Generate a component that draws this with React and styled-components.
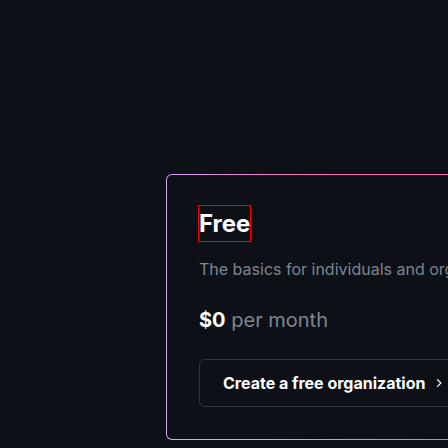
import styled, { createGlobalStyle } from "styled-components";

const GlobalStyle = createGlobalStyle`
  html, body {
    margin: 0;
    padding: 0;
    background: #0d1117;
    overflow: hidden;
  }
  body {
    font-family: Inter, "Liberation Sans", sans-serif;
    color: #e6edf3;
  }
`

const Page = styled.div`
  width: 448px;
  height: 448px;
  padding: 174px 0 0 166px;
  box-sizing: border-box;
  overflow: hidden;
`

const Card = styled.div`
  width: 520px;
  padding: 31px 32px 32px 32px;
  border: 1px solid transparent;
  border-radius: 6px;
  box-sizing: border-box;
  background:
    linear-gradient(#0d1117, #0d1117) padding-box,
    linear-gradient(70deg, #d2a8ff 0%, #d2a8ff 12%, #ff6ba8 45%, #ff6ba8 100%) border-box;
`

const Title = styled.h3`
  display: inline-block;
  margin: 0;
  font-size: 24px;
  font-weight: 700;
  line-height: 35px;
  color: #ffffff;
  outline: 1px solid #ff0000;
`

const Desc = styled.p`
  margin: 16px 0 0;
  font-size: 16px;
  line-height: 24px;
  color: #7d8590;
  white-space: nowrap;
`

const Price = styled.p`
  margin: 24px 0 0;
  font-size: 20px;
  line-height: 30px;
  color: #7d8590;
  white-space: nowrap;

  strong {
    color: #ffffff;
    font-weight: 700;
  }
`

const Button = styled.a`
  display: flex;
  align-items: center;
  gap: 8px;
  margin-top: 24px;
  padding: 11px 23px;
  border: 1px solid #30363d;
  border-radius: 6px;
  font-size: 16px;
  font-weight: 700;
  line-height: 24px;
  color: #ffffff;
  white-space: nowrap;
  text-decoration: none;
  cursor: pointer;
`

const Chevron = () => (
  <svg width="12" height="12" viewBox="0 0 16 16" fill="none" stroke="#ffffff" strokeWidth="1.6" strokeLinecap="round" strokeLinejoin="round">
    <path d="M6 3.5 10.5 8 6 12.5" />
  </svg>
)

export default function App() {
  return (
    <>
      <GlobalStyle />
      <Page>
        <Card>
          <Title>Free</Title>
          <Desc>The basics for individuals and organizations</Desc>
          <Price><strong>$0</strong> per month</Price>
          <Button>Create a free organization <Chevron /></Button>
        </Card>
      </Page>
    </>
  )
}
